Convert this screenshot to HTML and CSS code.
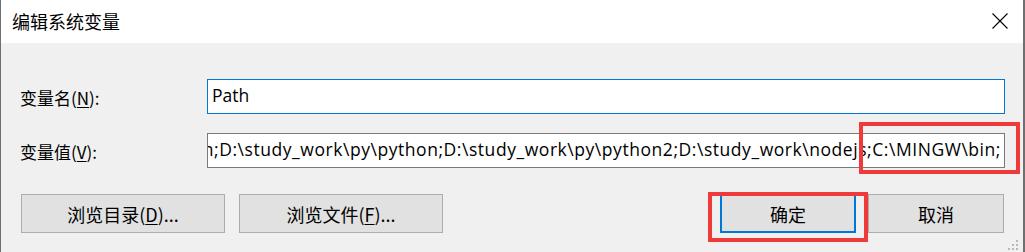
FILE: index.html
```html
<!DOCTYPE html>
<html lang="zh-CN">
<head>
<meta charset="utf-8">
<title>编辑系统变量</title>
<link rel="stylesheet" href="styles.css">
</head>
<body>
<div class="window">
  <div class="titlebar">
    <span class="title">编辑系统变量</span>
    <svg class="close" width="16" height="16" viewBox="0 0 16 16">
      <path d="M0.5 0.5 L15.5 15.5 M15.5 0.5 L0.5 15.5" stroke="#000" stroke-width="1.1" fill="none"/>
    </svg>
  </div>
  <div class="content">
    <div class="fields">
      <label class="label">变量名(<u>N</u>):</label>
      <div class="input focused"><span class="value">Path</span></div>
      <label class="label">变量值(<u>V</u>):</label>
      <div class="input scrolled"><span class="value long">n;D:\study_work\py\python;D:\study_work\py\python2;D:\study_work\nodejs;C:\MINGW\bin;</span></div>
    </div>
    <div class="buttons">
      <div class="group">
        <div class="btn wide">浏览目录(<u>D</u>)...</div>
        <div class="btn wide">浏览文件(<u>F</u>)...</div>
      </div>
      <div class="group right">
        <div class="btn default">确定</div>
        <div class="btn">取消</div>
      </div>
    </div>
  </div>
  <svg class="grip" width="12" height="12" viewBox="0 0 12 12">
    <rect x="8" y="0" width="2" height="2" fill="#b8b8b8"/>
    <rect x="4" y="4" width="2" height="2" fill="#b8b8b8"/>
    <rect x="8" y="4" width="2" height="2" fill="#b8b8b8"/>
    <rect x="0" y="8" width="2" height="2" fill="#b8b8b8"/>
    <rect x="4" y="8" width="2" height="2" fill="#b8b8b8"/>
    <rect x="8" y="8" width="2" height="2" fill="#b8b8b8"/>
  </svg>
  <div class="mark mark-path"></div>
  <div class="mark mark-ok"></div>
</div>
</body>
</html>
```
FILE: styles.css
```css
* { box-sizing: border-box; }
html, body { margin: 0; padding: 0; }
body {
  width: 1025px;
  height: 252px;
  overflow: hidden;
  font-family: "Noto Sans CJK SC", sans-serif;
  color: #000;
  background: #f0f0f0;
}
.window {
  position: relative;
  width: 1025px;
  height: 252px;
  background: #f0f0f0;
  border-left: 1px solid #6f6f6f;
  border-right: 2px solid #6f6f6f;
}
.titlebar {
  height: 43px;
  background: #fff;
  display: flex;
  align-items: center;
  justify-content: space-between;
  padding: 0 15px 0 11px;
}
.title {
  font-size: 18px;
  line-height: 1;
  padding-bottom: 2px;
}
.close { display: block; margin-bottom: 2px; }
.content {
  padding: 36px 18px 0 19px;
}
.fields {
  display: grid;
  grid-template-columns: 187px 1fr;
  row-gap: 19px;
  align-items: center;
}
.label {
  font-size: 17px;
  line-height: 1;
  padding-top: 2px;
}
u { text-underline-offset: 2px; }
.input {
  height: 35px;
  background: #fff;
  border: 1px solid #7a7a7a;
  display: flex;
  align-items: center;
  padding: 0 4px;
  overflow: hidden;
  white-space: nowrap;
}
.input.focused { border-color: #0078d7; }
.input.scrolled { justify-content: flex-end; padding-right: 3px; }
.value {
  font-family: "Open Sans", sans-serif;
  font-size: 17.5px;
  line-height: 1;
  flex-shrink: 0;
  padding-bottom: 2px;
}
.value.long { letter-spacing: 0.55px; }
.buttons {
  display: flex;
  justify-content: space-between;
  margin-top: 26px;
  padding-left: 1px;
  padding-right: 1px;
}
.group { display: flex; gap: 14px; }
.group.right { gap: 12px; }
.btn {
  width: 136px;
  height: 39px;
  background: #e1e1e1;
  border: 1px solid #adadad;
  display: flex;
  align-items: center;
  justify-content: center;
  font-size: 18px;
  line-height: 1;
}
.btn.wide { width: 204px; }
.btn.default { border: 2px solid #0078d7; }
.grip { position: absolute; right: 3px; bottom: 0; }
.mark {
  position: absolute;
  border: 4px solid #f03a3a;
}
.mark-path { left: 858px; top: 122px; width: 161px; height: 52px; }
.mark-ok { left: 707px; top: 192px; width: 160px; height: 50px; }
```
